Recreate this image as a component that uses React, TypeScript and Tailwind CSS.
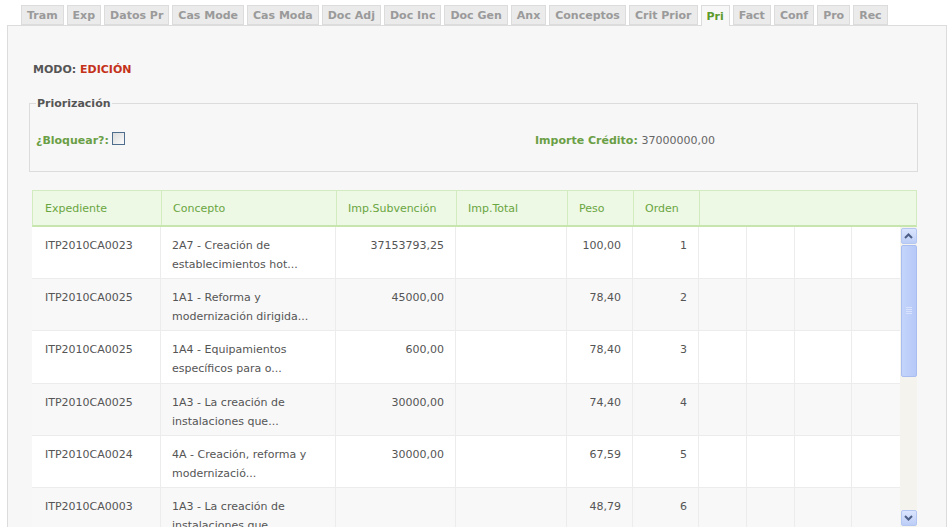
import React from "react";

const tabs = [
  "Tram", "Exp", "Datos Pr", "Cas Mode", "Cas Moda", "Doc Adj", "Doc Inc", "Doc Gen",
  "Anx", "Conceptos", "Crit Prior", "Pri", "Fact", "Conf", "Pro", "Rec",
];

const rows = [
  { exp: "ITP2010CA0023", con: ["2A7 - Creación de", "establecimientos hot..."], sub: "37153793,25", peso: "100,00", orden: "1" },
  { exp: "ITP2010CA0025", con: ["1A1 - Reforma y", "modernización dirigida..."], sub: "45000,00", peso: "78,40", orden: "2" },
  { exp: "ITP2010CA0025", con: ["1A4 - Equipamientos", "específicos para o..."], sub: "600,00", peso: "78,40", orden: "3" },
  { exp: "ITP2010CA0025", con: ["1A3 - La creación de", "instalaciones que..."], sub: "30000,00", peso: "74,40", orden: "4" },
  { exp: "ITP2010CA0024", con: ["4A - Creación, reforma y", "modernizació..."], sub: "30000,00", peso: "67,59", orden: "5" },
  { exp: "ITP2010CA0003", con: ["1A3 - La creación de", "instalaciones que..."], sub: "", peso: "48,79", orden: "6" },
];

const Chevron = ({ down }: { down?: boolean }) => (
  <svg width="9" height="6" viewBox="0 0 9 6">
    <path
      d={down ? "M1 1 L4.5 4.5 L8 1" : "M1 5 L4.5 1.5 L8 5"}
      fill="none"
      stroke="#4d5f86"
      strokeWidth="2"
    />
  </svg>
);

export default function App() {
  return (
    <div className="w-[952px] h-[527px] overflow-hidden bg-white font-['DejaVu_Sans',Verdana,sans-serif] text-[11px] text-[#555]">
      {/* tab strip */}
      <div className="flex gap-[3px] pl-[21px] pt-[5px]">
        {tabs.map((t) =>
          t === "Pri" ? (
            <div
              key={t}
              className="h-[21px] px-[5px] pt-[2px] flex items-center font-bold text-[#5c9a2c] bg-[#f7f7f7] border border-b-0 border-[#dcdcdc] relative z-10 -mb-px"
            >
              {t}
            </div>
          ) : (
            <div
              key={t}
              className="h-[20px] px-[5px] pt-[2px] flex items-center font-bold text-[#9a9a9a] bg-[#ebebeb] border border-[#dcdcdc]"
            >
              {t}
            </div>
          )
        )}
      </div>

      {/* panel */}
      <div className="ml-[7px] w-[940px] h-[520px] bg-[#f7f7f7] border border-[#dcdcdc] pl-[21px] pr-[28px]">
        <div className="pt-[36px] pl-[4px] font-bold text-[#555]">
          MODO: <span className="text-[#c4321b]">EDICIÓN</span>
        </div>

        <fieldset className="mt-[17px] border border-[#dcdcdc] h-[76px] px-[6px]">
          <legend className="font-bold text-[#555] px-[1px]">Priorización</legend>
          <div className="flex items-center pt-[21px]">
            <div className="w-[499px] flex items-center font-bold text-[#6b9f46]">
              ¿Bloquear?:
              <span className="ml-[3px] w-[13px] h-[13px] border border-[#4f6e8e] bg-gradient-to-br from-[#dcdcdc] to-[#fbfbfb] -mt-[6px]" />
            </div>
            <div className="font-bold text-[#6b9f46]">
              Importe Crédito: <span className="font-normal text-[#666]">37000000,00</span>
            </div>
          </div>
        </fieldset>

        {/* grid */}
        <div className="mt-[18px] ml-[3px] w-[885px]">
          <div className="flex h-[37px] bg-[#edf8e5] border border-[#d2ecbf] border-b-2 border-b-[#c6e6ae] text-[#6aa63f]">
            <div className="w-[129px] pl-[12px] pt-[3px] flex items-center border-r border-[#d2ecbf]">Expediente</div>
            <div className="w-[175px] pl-[11px] pt-[3px] flex items-center border-r border-[#d2ecbf]">Concepto</div>
            <div className="w-[120px] pl-[11px] pt-[3px] flex items-center border-r border-[#d2ecbf]">Imp.Subvención</div>
            <div className="w-[111px] pl-[11px] pt-[3px] flex items-center border-r border-[#d2ecbf]">Imp.Total</div>
            <div className="w-[66px] pl-[11px] pt-[3px] flex items-center border-r border-[#d2ecbf]">Peso</div>
            <div className="w-[66px] pl-[11px] pt-[3px] flex items-center border-r border-[#d2ecbf]">Orden</div>
            <div className="flex-1" />
          </div>

          <div className="flex h-[300px]">
            <div className="flex-1 overflow-hidden">
              {rows.map((r, i) => (
                <div
                  key={i}
                  className={`flex h-[52.4px] shrink-0 border-b border-[#ececec] ${i % 2 === 0 ? "bg-white" : "bg-[#f8f8f8]"}`}
                >
                  <div className="w-[129px] pl-[13px] pt-[9px] leading-[19px] border-r border-[#ececec]">{r.exp}</div>
                  <div className="w-[175px] pl-[11px] pt-[9px] leading-[19px] border-r border-[#ececec]">
                    <div>{r.con[0]}</div>
                    <div>{r.con[1]}</div>
                  </div>
                  <div className="w-[120px] pr-[11px] pt-[9px] leading-[19px] text-right border-r border-[#ececec]">{r.sub}</div>
                  <div className="w-[111px] border-r border-[#ececec]" />
                  <div className="w-[66px] pr-[11px] pt-[9px] leading-[19px] text-right border-r border-[#ececec]">{r.peso}</div>
                  <div className="w-[66px] pr-[11px] pt-[9px] leading-[19px] text-right border-r border-[#ececec]">{r.orden}</div>
                  <div className="w-[48px] border-r border-[#ececec]" />
                  <div className="w-[48px] border-r border-[#ececec]" />
                  <div className="w-[57px] border-r border-[#ececec]" />
                  <div className="flex-1" />
                </div>
              ))}
            </div>

            {/* scrollbar */}
            <div className="w-[17px] bg-[#f4f3ee] flex flex-col items-center pt-px">
              <div className="w-[16px] h-[16px] rounded-[2px] border border-[#b4c6f2] bg-gradient-to-b from-[#dbe5fd] to-[#bccdf6] flex items-center justify-center">
                <Chevron />
              </div>
              <div className="mt-px w-[16px] h-[132px] rounded-[2px] border border-[#a9bdf0] bg-gradient-to-r from-[#c4d4fb] to-[#b6c9f7] flex flex-col items-center justify-center gap-[1px]">
                <div className="w-[6px] h-px bg-[#d8e2fc]" />
                <div className="w-[6px] h-px bg-[#d8e2fc]" />
                <div className="w-[6px] h-px bg-[#d8e2fc]" />
                <div className="w-[6px] h-px bg-[#d8e2fc]" />
              </div>
              <div className="flex-1" />
              <div className="mb-[1px] w-[16px] h-[16px] rounded-[2px] border border-[#b4c6f2] bg-gradient-to-b from-[#dbe5fd] to-[#bccdf6] flex items-center justify-center">
                <Chevron down />
              </div>
            </div>
          </div>
        </div>
      </div>
    </div>
  );
}
